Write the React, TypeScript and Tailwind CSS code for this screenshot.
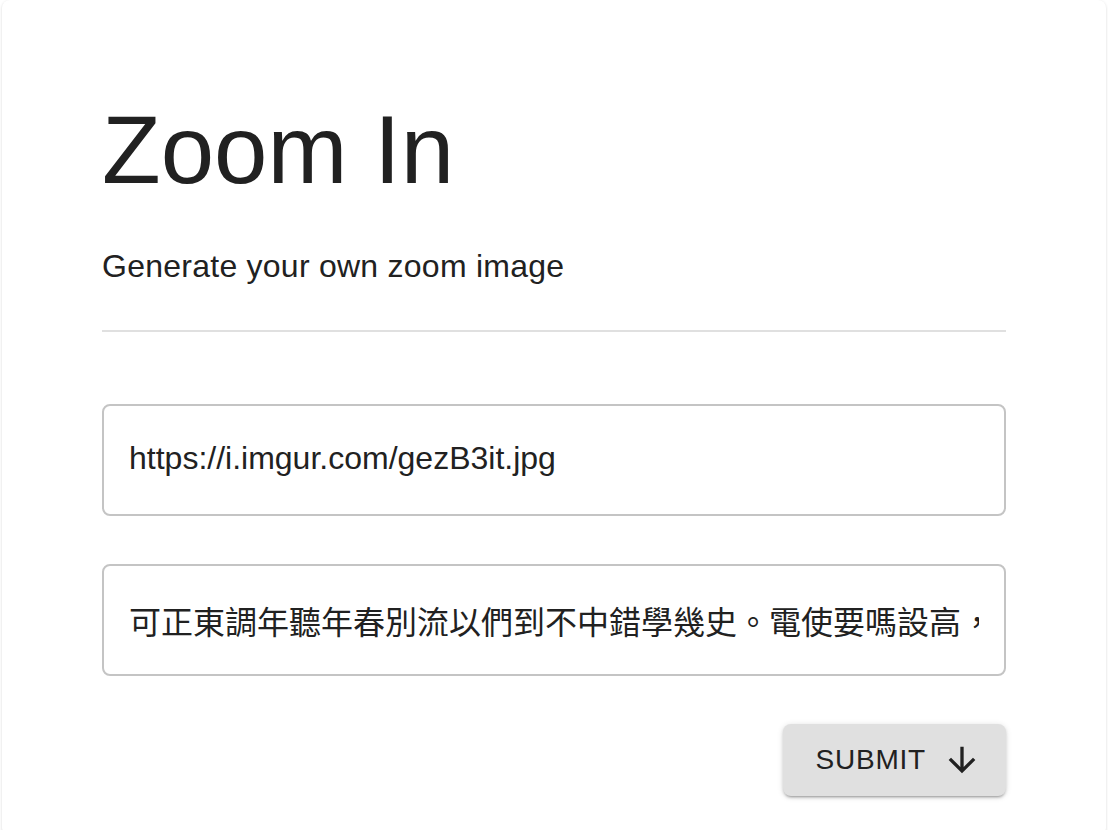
import { useState } from "react";

// 2x-scaled form card
export default function App() {
  const [url, setUrl] = useState("https://i.imgur.com/gezB3it.jpg");
  const [text, setText] = useState(
    "可正東調年聽年春別流以們到不中錯學幾史。電使要嗎設高，個她發們回己生物理。"
  );

  return (
    <div
      className="min-h-screen bg-white px-[2px] text-[#212121]"
      style={{ fontFamily: '"Liberation Sans", "Noto Sans CJK TC", sans-serif' }}
    >
      <div className="min-h-[830px] rounded-[8px] bg-white px-[100px] pt-[94px] pb-[40px] shadow-[0_1px_3px_rgba(0,0,0,0.16)]">
        {/* 타이틀 */}
        <h1 className="text-[96px] leading-[112px] font-normal">Zoom In</h1>
        <p className="mt-[36px] text-[32px] leading-[48px] tracking-[0.25px]">
          Generate your own zoom image
        </p>
        <hr className="mt-[40px] border-0 border-t-2 border-[#e0e0e0]" />

        {/* 입력 영역 */}
        <form
          className="mt-[72px] flex flex-col"
          onSubmit={(e) => e.preventDefault()}
        >
          <input
            value={url}
            onChange={(e) => setUrl(e.target.value)}
            className="box-border h-[112px] w-full rounded-[8px] border-2 border-[#c4c4c4] px-[25px] pb-[3px] text-[32px] text-[#212121] outline-none"
          />
          <input
            value={text}
            onChange={(e) => setText(e.target.value)}
            className="mt-[48px] box-border h-[112px] w-full rounded-[8px] border-2 border-[#c4c4c4] px-[25px] text-[32px] text-[#212121] outline-none"
          />
          <button
            type="submit"
            className="mt-[48px] flex h-[72px] items-center self-end rounded-[8px] bg-[#e0e0e0] px-[32px] text-[28px] uppercase tracking-[0.8px] text-[#212121] shadow-[0_3px_2px_-2px_rgba(0,0,0,0.2),0_2px_3px_0_rgba(0,0,0,0.14),0_1px_6px_0_rgba(0,0,0,0.12)]"
          >
            Submit
            <svg
              viewBox="0 0 24 24"
              className="ml-[16px] -mr-[8px] h-[40px] w-[40px]"
              fill="currentColor"
            >
              <path d="M20 12l-1.41-1.41L13 16.17V4h-2v12.17l-5.58-5.59L4 12l8 8 8-8z" />
            </svg>
          </button>
        </form>
      </div>
    </div>
  );
}
